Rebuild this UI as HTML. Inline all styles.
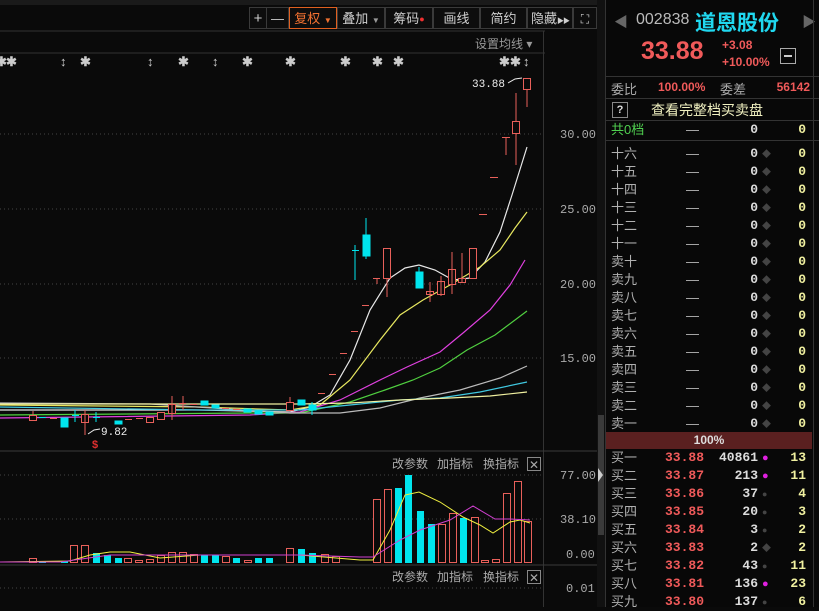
<!DOCTYPE html>
<html><head><meta charset="utf-8"><style>
*{margin:0;padding:0}
body{width:819px;height:607px;background:#0a0a0a;overflow:hidden;position:relative;font-family:"Liberation Sans","Noto Sans CJK SC",sans-serif;color:#ccc}
.a{position:absolute;white-space:nowrap}
.btn{position:absolute;top:7px;height:22px;border:1px solid #3a3a3a;color:#cfcfcf;font-size:13px;line-height:22px;text-align:center;box-sizing:border-box;background:#0d0d0d;white-space:nowrap;overflow:hidden}
.r{position:absolute;left:0;width:214px;height:18px;font-size:13px;line-height:18px}
.r span{position:absolute}
.l{left:5px;color:#b0b0b0}
.d{left:80px;color:#bbb}
.p{left:28px;width:70px;text-align:right;color:#f05a5a;font-weight:bold;font-family:"Liberation Mono",monospace}
.v{right:62px;color:#ddd;font-weight:bold;font-family:"Liberation Mono",monospace}
.dot{left:156px;font-size:9px;color:#444}
.dm{color:#e020e0!important;font-size:11px!important}
.n{right:14px;color:#f0f0a0;font-weight:bold;font-family:"Liberation Mono",monospace}
</style></head><body>
<svg class="a" style="left:0;top:0" width="605" height="607" xmlns="http://www.w3.org/2000/svg">
<rect x="0" y="0" width="605" height="5" fill="#1a1a1a"/>
<line x1="0" y1="31" x2="545" y2="31" stroke="#333"/>
<line x1="0" y1="53" x2="545" y2="53" stroke="#333"/>
<line x1="543.5" y1="31" x2="543.5" y2="607" stroke="#333"/>
<line x1="0" y1="451" x2="597" y2="451" stroke="#3a3a3a"/>
<line x1="0" y1="565" x2="597" y2="565" stroke="#3a3a3a"/>
<rect x="597" y="0" width="8" height="607" fill="#111"/>
<rect x="598" y="415" width="6" height="120" fill="#3a3a3a"/>
<polygon points="598,468 603,475 598,482" fill="#ccc"/>
<g stroke="#444" stroke-dasharray="1,3">
<line x1="0" y1="134" x2="543" y2="134"/><line x1="0" y1="209" x2="543" y2="209"/>
<line x1="0" y1="284" x2="543" y2="284"/><line x1="0" y1="358" x2="543" y2="358"/>
<line x1="0" y1="475" x2="543" y2="475"/><line x1="0" y1="519" x2="543" y2="519"/>
<line x1="0" y1="588" x2="543" y2="588"/>
</g>
<g font-family="Liberation Mono,monospace" font-size="12" fill="#aaa">
<text x="560" y="138">30.00</text><text x="560" y="213">25.00</text>
<text x="560" y="288">20.00</text><text x="560" y="362">15.00</text>
<text x="560" y="479">77.00</text><text x="560" y="523">38.10</text>
<text x="566" y="558">0.00</text><text x="566" y="592">0.01</text>
</g>
<g fill="#ccc" font-size="13" font-weight="bold">
<text x="-4" y="66">✱</text><text x="6" y="66">✱</text><text x="60" y="66">↕</text><text x="80" y="66">✱</text><text x="147" y="66">↕</text><text x="178" y="66">✱</text><text x="212" y="66">↕</text><text x="242" y="66">✱</text><text x="285" y="66">✱</text><text x="340" y="66">✱</text><text x="372" y="66">✱</text><text x="393" y="66">✱</text><text x="499" y="66">✱</text><text x="510" y="66">✱</text><text x="523" y="66">↕</text>
</g>
<text x="475" y="48" font-size="12" fill="#999">设置均线 ▾</text>
<g fill="none" stroke-width="1.2">
<polyline stroke="#e8e8e8" points="0,410 200,410 290,412 310,407 330,395 350,360 370,310 390,278 405,268 419,265 435,270 453,280 470,278 485,262 500,232 512,195 527,147"/>
<polyline stroke="#e8e860" points="0,405 200,407 290,410 320,405 350,380 380,340 400,315 423,300 450,285 480,267 500,250 515,228 527,212"/>
<polyline stroke="#e040e0" points="0,418 250,415 300,412 340,400 380,380 407,367 440,352 463,333 490,310 510,285 525,260"/>
<polyline stroke="#50d040" points="0,415 250,413 300,413 350,402 385,390 413,380 440,368 467,350 495,335 527,311"/>
<polyline stroke="#bbb" points="0,403 150,404 290,413 340,413 380,408 420,398 460,390 500,378 527,366"/>
<polyline stroke="#40c8e0" points="0,407 200,410 300,410 350,405 400,400 440,398 480,392 527,382"/>
<polyline stroke="#f0f0a0" points="0,404 300,404 350,403 400,400 450,398 490,396 527,392"/>
</g>
<g stroke="#e8605a" fill="#0a0a0a" stroke-width="1">
<rect x="29.5" y="415.5" width="7" height="5"/><line x1="33" y1="411" x2="33" y2="415"/>
<line x1="50" y1="418.5" x2="57" y2="418.5"/>
<rect x="81.5" y="414.5" width="7" height="8"/><line x1="85" y1="410" x2="85" y2="435"/>
<line x1="125" y1="419.5" x2="132" y2="419.5"/><line x1="136" y1="418.5" x2="143" y2="418.5"/>
<rect x="146.5" y="417.5" width="7" height="5"/>
<rect x="157.5" y="412.5" width="7" height="7"/>
<rect x="168.5" y="404.5" width="7" height="9"/><line x1="172" y1="396" x2="172" y2="420"/>
<line x1="179" y1="403.5" x2="186" y2="403.5"/><line x1="183" y1="396" x2="183" y2="410"/>
<line x1="190" y1="404.5" x2="197" y2="404.5"/>
<line x1="222" y1="408.5" x2="229" y2="408.5"/><line x1="233" y1="409.5" x2="240" y2="409.5"/>
<rect x="286.5" y="402.5" width="7" height="8"/><line x1="290" y1="397" x2="290" y2="402"/>
<line x1="318" y1="393.5" x2="325" y2="393.5"/><line x1="329" y1="374.5" x2="336" y2="374.5"/>
<line x1="340" y1="353.5" x2="347" y2="353.5"/><line x1="351" y1="331.5" x2="358" y2="331.5"/>
<line x1="362" y1="305.5" x2="369" y2="305.5"/>
<line x1="373" y1="278.5" x2="380" y2="278.5"/><line x1="377" y1="278" x2="377" y2="284"/>
<rect x="383.5" y="248.5" width="7" height="30"/><line x1="387" y1="278" x2="387" y2="297"/>
<rect x="426.5" y="291.5" width="7" height="3"/><line x1="430" y1="282" x2="430" y2="302"/>
<rect x="437.5" y="281.5" width="7" height="13"/><line x1="441" y1="276" x2="441" y2="296"/>
<rect x="448.5" y="269.5" width="7" height="15"/><line x1="452" y1="252" x2="452" y2="294"/>
<rect x="458.5" y="278.5" width="7" height="4"/><line x1="462" y1="253" x2="462" y2="283"/>
<rect x="469.5" y="248.5" width="7" height="30"/>
<line x1="479" y1="214.5" x2="487" y2="214.5"/><line x1="490" y1="177.5" x2="498" y2="177.5"/>
<line x1="502" y1="137.5" x2="510" y2="137.5"/><line x1="506" y1="137" x2="506" y2="155"/>
<rect x="512.5" y="121.5" width="7" height="12"/><line x1="516" y1="93" x2="516" y2="121"/><line x1="516" y1="134" x2="516" y2="165"/>
<rect x="523.5" y="78.5" width="7" height="11"/><line x1="527" y1="90" x2="527" y2="107"/>
</g>
<g fill="#00e5ee" stroke="#00e5ee">
<line x1="39" y1="417.5" x2="46" y2="417.5"/>
<rect x="61" y="418" width="7" height="9"/>
<line x1="72" y1="415.5" x2="79" y2="415.5"/><line x1="75" y1="410" x2="75" y2="422"/>
<line x1="93" y1="417.5" x2="100" y2="417.5"/><line x1="96" y1="412" x2="96" y2="422"/>
<rect x="115" y="421" width="7" height="3"/>
<rect x="201" y="401" width="7" height="4"/><rect x="212" y="405" width="7" height="3"/>
<rect x="244" y="409" width="7" height="3"/><rect x="255" y="411" width="7" height="3"/>
<rect x="266" y="412" width="7" height="3"/>
<rect x="298" y="400" width="7" height="5"/>
<rect x="309" y="405" width="7" height="5"/><line x1="312" y1="402" x2="312" y2="415"/>
<line x1="352" y1="250.5" x2="359" y2="250.5"/><line x1="355" y1="245" x2="355" y2="280"/>
<rect x="363" y="235" width="7" height="21"/><line x1="366" y1="218" x2="366" y2="259"/>
<rect x="416" y="272" width="7" height="16"/><line x1="419" y1="267" x2="419" y2="272"/>
</g>
<text x="472" y="87" font-family="Liberation Mono,monospace" font-size="11" fill="#eee">33.88</text>
<polyline points="508,83 515,79 522,78" stroke="#eee" fill="none"/>
<text x="101" y="435" font-family="Liberation Mono,monospace" font-size="11" fill="#eee">9.82</text>
<polyline points="88,434 94,430 100,429" stroke="#eee" fill="none"/>
<text x="92" y="448" font-size="11" font-weight="bold" fill="#e03030">$</text>
<g font-size="12" fill="#aaa">
<text x="392" y="468">改参数</text><text x="437" y="468">加指标</text><text x="483" y="468">换指标</text>
<text x="392" y="581">改参数</text><text x="437" y="581">加指标</text><text x="483" y="581">换指标</text>
</g>
<rect x="527.5" y="457.5" width="13" height="13" fill="none" stroke="#888"/><text x="529" y="469" font-size="12" fill="#aaa">✕</text>
<rect x="527.5" y="570.5" width="13" height="13" fill="none" stroke="#888"/><text x="529" y="582" font-size="12" fill="#aaa">✕</text>
<g stroke="#e8605a" fill="#0a0a0a">
<rect x="29.5" y="558.5" width="7" height="4"/><rect x="70.5" y="545.5" width="7" height="17"/><rect x="81.5" y="545.5" width="7" height="17"/>
<rect x="124.5" y="558.5" width="7" height="4"/><rect x="135.5" y="560.5" width="7" height="2"/><rect x="146.5" y="559.5" width="7" height="3"/>
<rect x="157.5" y="555.5" width="7" height="7"/><rect x="168.5" y="552.5" width="7" height="10"/><rect x="179.5" y="552.5" width="7" height="10"/>
<rect x="190.5" y="554.5" width="7" height="8"/><rect x="222.5" y="556.5" width="7" height="6"/><rect x="244.5" y="560.5" width="7" height="2"/>
<rect x="286.5" y="548.5" width="7" height="14"/><rect x="321.5" y="554.5" width="7" height="8"/><rect x="332.5" y="556.5" width="7" height="6"/>
<rect x="373.5" y="499.5" width="7" height="63"/><rect x="384.5" y="489.5" width="7" height="73"/>
<rect x="438.5" y="524.5" width="7" height="38"/><rect x="449.5" y="513.5" width="7" height="49"/>
<rect x="471.5" y="517.5" width="7" height="45"/><rect x="481.5" y="560.5" width="7" height="2"/><rect x="492.5" y="559.5" width="7" height="3"/>
<rect x="503.5" y="493.5" width="7" height="69"/><rect x="514.5" y="481.5" width="7" height="81"/><rect x="524.5" y="521.5" width="7" height="41"/>
</g>
<g fill="#00e5ee">
<rect x="39" y="561" width="7" height="2"/><rect x="61" y="561" width="7" height="2"/><rect x="93" y="553" width="7" height="10"/>
<rect x="104" y="555" width="7" height="8"/><rect x="115" y="558" width="7" height="5"/>
<rect x="201" y="555" width="7" height="8"/><rect x="212" y="555" width="7" height="8"/><rect x="233" y="558" width="7" height="5"/>
<rect x="255" y="558" width="7" height="5"/><rect x="266" y="558" width="7" height="5"/><rect x="298" y="549" width="7" height="14"/>
<rect x="309" y="553" width="7" height="10"/>
<rect x="395" y="488" width="7" height="75"/><rect x="405" y="475" width="7" height="88"/><rect x="417" y="511" width="7" height="52"/>
<rect x="428" y="524" width="7" height="39"/><rect x="460" y="518" width="7" height="45"/>
</g>
<polyline fill="none" stroke="#f0f040" points="0,562 70,561 90,555 110,552 130,552 160,558 200,555 260,555 300,555 360,560 373,560 390,530 405,495 419,492 440,502 463,517 480,525 493,533 510,522 520,520 530,523"/>
<polyline fill="none" stroke="#d040d0" points="0,562 60,562 110,555 135,555 200,555 300,555 360,557 373,557 400,540 420,530 450,520 473,506 495,519 510,519 530,520"/>
</svg>
<div class="btn" style="left:249px;width:18px;font-size:15px">+</div>
<div class="btn" style="left:266px;width:23px">—</div>
<div class="btn" style="left:289px;width:48px;border-color:#e06020;color:#f07030">复权 <span style="font-size:8px">▼</span></div>
<div class="btn" style="left:337px;width:48px">叠加 <span style="font-size:8px;color:#999">▼</span></div>
<div class="btn" style="left:385px;width:48px">筹码<span style="color:#f03030;font-size:9px;vertical-align:top">●</span></div>
<div class="btn" style="left:433px;width:47px">画线</div>
<div class="btn" style="left:480px;width:47px">简约</div>
<div class="btn" style="left:527px;width:46px;text-align:left;padding-left:3px">隐藏<span style="font-size:7px;letter-spacing:-1px">▶▶</span></div>
<div class="btn" style="left:573px;width:24px;font-size:12px">⛶</div>
<div class="a" style="left:605px;top:0;width:214px;height:607px;background:#080808;border-left:1px solid #333">
<div class="a" style="left:8px;top:12px;color:#666;font-size:14px">◀</div>
<div class="a" style="left:30px;top:11px;font-size:16px;color:#bbb">002838</div>
<div class="a" style="left:89px;top:7px;font-size:21px;color:#20d8f0;font-weight:bold">道恩股份</div>
<div class="a" style="left:196px;top:12px;color:#666;font-size:14px">▶</div>
<div class="a" style="left:35px;top:37px;font-size:25px;color:#f05a5a;font-weight:bold">33.88</div>
<div class="a" style="left:116px;top:38px;font-size:12px;color:#f05a5a;font-weight:bold">+3.08</div>
<div class="a" style="left:116px;top:55px;font-size:12px;color:#f05a5a;font-weight:bold">+10.00%</div>
<div class="a" style="left:174px;top:48px;width:16px;height:16px;border:1px solid #aaa;box-sizing:border-box"><div class="a" style="left:3px;top:6px;width:8px;height:2px;background:#ccc"></div></div>
<div class="a" style="left:0;top:76px;width:214px;border-top:1px solid #333"></div>
<div class="a" style="left:5px;top:79px;font-size:13px;color:#aaa">委比</div>
<div class="a" style="left:52px;top:80px;font-size:12px;color:#f05a5a;font-weight:bold">100.00%</div>
<div class="a" style="left:114px;top:79px;font-size:13px;color:#aaa">委差</div>
<div class="a" style="right:10px;top:80px;font-size:12px;color:#f05a5a;font-weight:bold">56142</div>
<div class="a" style="left:0;top:98px;width:214px;border-top:1px solid #333"></div>
<div class="a" style="left:6px;top:102px;width:14px;height:14px;border:1px solid #888;font-size:11px;text-align:center;line-height:14px;color:#ddd;font-weight:bold">?</div>
<div class="a" style="left:45px;top:100px;font-size:14px;color:#f0f0c0">查看完整档买卖盘</div>
<div class="a" style="left:0;top:120px;width:214px;border-top:1px solid #333"></div>
<div class="r" style="top:121px"><span class="l" style="color:#50d050">共0档</span><span class="d">—</span><span class="v">0</span><span class="n">0</span></div>
<div class="a" style="left:0;top:140px;width:214px;border-top:1px solid #333"></div>
<div class="r" style="top:145px"><span class="l">十六</span><span class="d">—</span><span class="v">0</span><span class="dot">◆</span><span class="n">0</span></div>
<div class="r" style="top:163px"><span class="l">十五</span><span class="d">—</span><span class="v">0</span><span class="dot">◆</span><span class="n">0</span></div>
<div class="r" style="top:181px"><span class="l">十四</span><span class="d">—</span><span class="v">0</span><span class="dot">◆</span><span class="n">0</span></div>
<div class="r" style="top:199px"><span class="l">十三</span><span class="d">—</span><span class="v">0</span><span class="dot">◆</span><span class="n">0</span></div>
<div class="r" style="top:217px"><span class="l">十二</span><span class="d">—</span><span class="v">0</span><span class="dot">◆</span><span class="n">0</span></div>
<div class="r" style="top:235px"><span class="l">十一</span><span class="d">—</span><span class="v">0</span><span class="dot">◆</span><span class="n">0</span></div>
<div class="r" style="top:253px"><span class="l">卖十</span><span class="d">—</span><span class="v">0</span><span class="dot">◆</span><span class="n">0</span></div>
<div class="r" style="top:271px"><span class="l">卖九</span><span class="d">—</span><span class="v">0</span><span class="dot">◆</span><span class="n">0</span></div>
<div class="r" style="top:289px"><span class="l">卖八</span><span class="d">—</span><span class="v">0</span><span class="dot">◆</span><span class="n">0</span></div>
<div class="r" style="top:307px"><span class="l">卖七</span><span class="d">—</span><span class="v">0</span><span class="dot">◆</span><span class="n">0</span></div>
<div class="r" style="top:325px"><span class="l">卖六</span><span class="d">—</span><span class="v">0</span><span class="dot">◆</span><span class="n">0</span></div>
<div class="r" style="top:343px"><span class="l">卖五</span><span class="d">—</span><span class="v">0</span><span class="dot">◆</span><span class="n">0</span></div>
<div class="r" style="top:361px"><span class="l">卖四</span><span class="d">—</span><span class="v">0</span><span class="dot">◆</span><span class="n">0</span></div>
<div class="r" style="top:379px"><span class="l">卖三</span><span class="d">—</span><span class="v">0</span><span class="dot">◆</span><span class="n">0</span></div>
<div class="r" style="top:397px"><span class="l">卖二</span><span class="d">—</span><span class="v">0</span><span class="dot">◆</span><span class="n">0</span></div>
<div class="r" style="top:415px"><span class="l">卖一</span><span class="d">—</span><span class="v">0</span><span class="dot">◆</span><span class="n">0</span></div>
<div class="a" style="left:0;top:432px;width:206px;height:17px;background:#5a2020;color:#ddd;font-size:12px;font-weight:bold;text-align:center;line-height:17px">100%</div>
<div class="r" style="top:449px"><span class="l">买一</span><span class="p">33.88</span><span class="v">40861</span><span class="dot dm">●</span><span class="n">13</span></div>
<div class="r" style="top:467px"><span class="l">买二</span><span class="p">33.87</span><span class="v">213</span><span class="dot dm">●</span><span class="n">11</span></div>
<div class="r" style="top:485px"><span class="l">买三</span><span class="p">33.86</span><span class="v">37</span><span class="dot">●</span><span class="n">4</span></div>
<div class="r" style="top:503px"><span class="l">买四</span><span class="p">33.85</span><span class="v">20</span><span class="dot">●</span><span class="n">3</span></div>
<div class="r" style="top:521px"><span class="l">买五</span><span class="p">33.84</span><span class="v">3</span><span class="dot">●</span><span class="n">2</span></div>
<div class="r" style="top:539px"><span class="l">买六</span><span class="p">33.83</span><span class="v">2</span><span class="dot">◆</span><span class="n">2</span></div>
<div class="r" style="top:557px"><span class="l">买七</span><span class="p">33.82</span><span class="v">43</span><span class="dot">●</span><span class="n">11</span></div>
<div class="r" style="top:575px"><span class="l">买八</span><span class="p">33.81</span><span class="v">136</span><span class="dot dm">●</span><span class="n">23</span></div>
<div class="r" style="top:593px"><span class="l">买九</span><span class="p">33.80</span><span class="v">137</span><span class="dot">●</span><span class="n">6</span></div>
<div class="a" style="left:207px;top:0;width:1px;height:607px;background:#333"></div>
</div>
</body></html>
